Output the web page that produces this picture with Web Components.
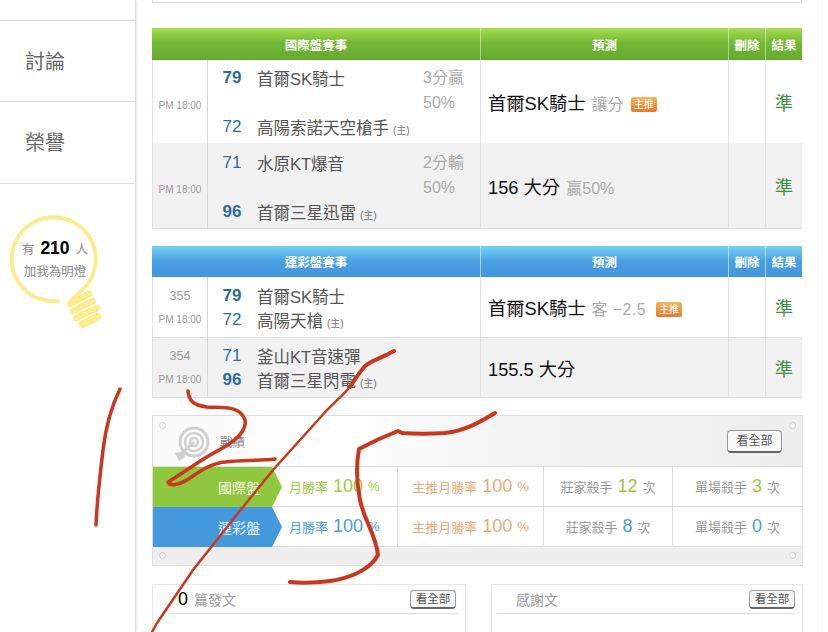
<!doctype html>
<html lang="zh-Hant">
<head>
<meta charset="utf-8">
<title>戰績</title>
<style>
  html, body { margin: 0; height: 632px; overflow: hidden; background: #fff; }
  body { font-family: "Liberation Sans", "Noto Sans CJK TC", sans-serif; }
</style>
</head>
<body>
<app-shell>
  <side-nav slot="side">
    <nav-item>討論</nav-item>
    <nav-item>榮譽</nav-item>
    <bulb-badge count="210"></bulb-badge>
  </side-nav>

  <score-table title="國際盤賽事" theme="green">
    <score-row height="83" pad="6" gap="25">
      <span slot="time">PM 18:00</span>
      <team-line score="79" win name="首爾SK騎士"></team-line>
      <team-line score="72" name="高陽索諾天空槍手" home></team-line>
      <span slot="line">3分贏<br>50%</span>
      <span slot="pick">首爾SK騎士 <small>讓分</small> <pick-badge></pick-badge></span>
      <span slot="result">準</span>
    </score-row>
    <score-row height="85" alt pad="8" gap="25">
      <span slot="time">PM 18:00</span>
      <team-line score="71" name="水原KT爆音"></team-line>
      <team-line score="96" win name="首爾三星迅雷" home></team-line>
      <span slot="line">2分輸<br>50%</span>
      <span slot="pick">156 大分 <small>贏50%</small></span>
      <span slot="result">準</span>
    </score-row>
  </score-table>

  <score-table title="運彩盤賽事" theme="blue" style="margin-top:17px">
    <score-row height="61" pad="7" gap="0" divided>
      <span slot="time"><b>355</b>PM 18:00</span>
      <team-line score="79" win name="首爾SK騎士"></team-line>
      <team-line score="72" name="高陽天槍" home></team-line>
      <span slot="pick">首爾SK騎士 <small style="letter-spacing:.4px">客 −2.5</small> <pick-badge style="margin-left:5px"></pick-badge></span>
      <span slot="result">準</span>
    </score-row>
    <score-row height="59" alt pad="6" gap="0">
      <span slot="time"><b>354</b>PM 18:00</span>
      <team-line score="71" name="釜山KT音速彈"></team-line>
      <team-line score="96" win name="首爾三星閃電" home></team-line>
      <span slot="pick">155.5 大分</span>
      <span slot="result">準</span>
    </score-row>
  </score-table>

  <record-panel>
    <record-row label="國際盤" theme="green">
      <record-cell lead>月勝率 <big-num>100</big-num> %</record-cell>
      <record-cell tone="orange">主推月勝率 <big-num>100</big-num> %</record-cell>
      <record-cell>莊家殺手 <big-num>12</big-num> 次</record-cell>
      <record-cell>單場殺手 <big-num>3</big-num> 次</record-cell>
    </record-row>
    <record-row label="運彩盤" theme="blue">
      <record-cell lead>月勝率 <big-num>100</big-num> %</record-cell>
      <record-cell tone="orange">主推月勝率 <big-num>100</big-num> %</record-cell>
      <record-cell>莊家殺手 <big-num>8</big-num> 次</record-cell>
      <record-cell>單場殺手 <big-num>0</big-num> 次</record-cell>
    </record-row>
  </record-panel>

  <panel-pair>
    <small-panel style="width:314px;--ml:15px;--mr:7px;--pad:10px;--pr:2px"><span style="color:#000;font-size:18px;margin-right:2px">0</span> 篇發文</small-panel>
    <small-panel style="width:312px;--ml:5px;--mr:7px;--pad:19px;--pr:0px">感謝文</small-panel>
  </panel-pair>

  <ink-marks slot="ink"></ink-marks>
</app-shell>

<script>
  function def(name, html, init) {
    const template = document.createElement('template');
    template.innerHTML = html;
    customElements.define(name, class extends HTMLElement {
      constructor() {
        super();
        this.attachShadow({ mode: 'open' }).appendChild(template.content.cloneNode(true));
      }
      connectedCallback() { if (init) init(this, this.shadowRoot); }
    });
  }

  def('app-shell', `
    <style>
      :host { display: grid; grid-template-columns: 136px 681px 1fr; position: relative; height: 632px; overflow: hidden; color: #333; }
      main { padding-left: 16px; min-width: 0; }
      .above { box-sizing: border-box; width: 650px; height: 3px; border: 1px solid #ddd; border-top: 0; margin-bottom: 25px; }
      .edge { border-left: 1px solid #f8f8f8; }
    </style>
    <slot name="side"></slot>
    <main><div class="above"></div><slot></slot></main>
    <div class="edge"></div>
    <slot name="ink"></slot>`);

  def('side-nav', `
    <style>
      :host { display: block; padding-top: 20px; border-right: 1px solid #ddd; box-shadow: 1px 0 3px #e8e8e8; height: 612px; }
    </style>
    <slot></slot>`);

  def('nav-item', `
    <style>
      :host { display: flex; align-items: center; box-sizing: border-box; height: 81px; padding: 0 0 1px 25px; border-top: 1px solid #ddd; font-size: 20px; color: #666; }
      :host(:nth-of-type(2)) { height: 83px; border-bottom: 1px solid #ddd; padding-bottom: 3px; }
    </style>
    <slot></slot>`);

  def('bulb-badge', `
    <style>
      :host { display: block; position: relative; height: 150px; }
      svg { position: absolute; left: 0; top: 0; }
      .txt { position: absolute; left: 11px; width: 88px; top: 53px; text-align: center; color: #888; font-size: 12.5px; line-height: 22px; }
      b { color: #000; font-size: 17.5px; margin: 0 6px; }
    </style>
    <svg width="120" height="150" viewBox="0 183 120 150" fill="none" stroke="#f9ed90" stroke-linecap="round">
      <path d="M58 300 A42 42 0 1 1 86 285 L71 300" stroke-width="4"/>
      <g stroke-width="6.5">
        <path d="M70 303 L89 293"/>
        <path d="M73 310 L93 300"/>
        <path d="M76 317 L97 307"/>
        <path d="M83 323 L97 316" stroke-width="8"/>
      </g>
    </svg>
    <div class="txt">有<b></b>人<br>加我為明燈</div>`,
    (el, root) => { root.querySelector('b').textContent = el.getAttribute('count'); });

  def('score-table', `
    <style>
      :host { display: block; width: 650px; border-bottom: 1px solid #ddd; }
      .head { display: grid; grid-template-columns: 328px 248px 37px 37px; height: 32px; color: #fff; font-size: 12.5px; font-weight: bold; }
      .head div { display: flex; align-items: center; justify-content: center; border-left: 1px solid rgba(255,255,255,.45); }
      .head div:first-child { border-left: 0; }
      :host([theme=green]) .head { background: linear-gradient(#a6dc50, #74b936 45%, #64ab2c); }
      :host([theme=blue]) .head { background: linear-gradient(#74d2f6, #4a9fe2 50%, #4496df); height: 31px; }
      :host([theme=blue]) .head div { border-left-color: rgba(255,255,255,.55); }
    </style>
    <div class="head"><div id="t"></div><div>預測</div><div>刪除</div><div>結果</div></div>
    <slot></slot>`,
    (el, root) => { root.getElementById('t').textContent = el.getAttribute('title'); });

  def('score-row', `
    <style>
      :host { display: grid; grid-template-columns: 55px 273px 248px 37px 37px; box-sizing: border-box; background: #fff; }
      :host([alt]) { background: #f1f1f1; }
      :host([divided]) { border-bottom: 1px solid #ddd; }
      .c { border-left: 1px solid #e4e4e4; display: flex; align-items: center; min-width: 0; box-sizing: border-box; }
      .time { justify-content: center; align-items: center; padding-top: 8px; font-size: 10px; line-height: 24px; color: #999; text-align: center; }
      .teams { display: grid; grid-template-columns: 1fr 57px; align-items: start; border-left-color: #d8d8d8; }
      .names { display: flex; flex-direction: column; }
      .line { font-size: 16px; line-height: 24.5px; color: #aaa; }
      .pick { padding-left: 7px; font-size: 18.3px; color: #111; white-space: nowrap; }
      .result { justify-content: center; font-size: 18px; color: #3f8f45; }
      ::slotted([slot=time]) { display: block; }
      ::slotted([slot=pick]) { display: block; }
    </style>
    <div class="c time"><slot name="time"></slot></div>
    <div class="c teams"><div class="names"><slot></slot></div><div class="line"><slot name="line"></slot></div></div>
    <div class="c pick"><slot name="pick"></slot></div>
    <div class="c"></div>
    <div class="c result"><slot name="result"></slot></div>`,
    (el, root) => {
      const pad = el.getAttribute('pad') + 'px';
      el.style.height = el.getAttribute('height') + 'px';
      const names = root.querySelector('.names');
      names.style.paddingTop = pad;
      names.style.gap = el.getAttribute('gap') + 'px';
      root.querySelector('.line').style.paddingTop = pad;
      const no = el.querySelector('[slot=time] b');
      if (no) {
        const tc = root.querySelector('.time');
        tc.style.alignItems = 'flex-start';
        tc.style.paddingTop = pad;
        no.style.cssText = 'display:block;font-weight:normal;font-size:12.5px;color:#999';
      }
      el.querySelectorAll('small').forEach(s => { s.style.fontSize = '16px'; s.style.color = '#aaa'; s.style.marginLeft = '1px'; });
    });

  def('team-line', `
    <style>
      :host { display: grid; grid-template-columns: 48px 1fr; height: 24px; align-items: center; white-space: nowrap; }
      .s { text-align: center; font-size: 17px; color: #2f6c9c; }
      :host([win]) .s { font-weight: bold; }
      .n { padding-left: 1px; font-size: 16.5px; color: #555; }
      .h { font-size: 10px; color: #777; margin-left: 4px; }
    </style>
    <span class="s"></span><span class="n"><span class="t"></span><span class="h" hidden>(主)</span></span>`,
    (el, root) => {
      root.querySelector('.s').textContent = el.getAttribute('score');
      root.querySelector('.t').textContent = el.getAttribute('name');
      root.querySelector('.h').hidden = !el.hasAttribute('home');
    });

  def('pick-badge', `
    <style>
      :host { display: inline-block; vertical-align: 2px; margin-left: 2px; width: 26px; height: 15px; line-height: 15px; text-align: center; font-size: 10px; color: #fff; border-radius: 2px; background: linear-gradient(#f6b65a, #e57a2c); }
    </style>主推`);

  def('record-panel', `
    <style>
      :host { display: block; position: relative; width: 651px; box-sizing: border-box; margin-top: 17px; border: 1px solid #ddd; border-right-color: #e4e4e4; background: #eee; }
      .top { display: flex; align-items: center; justify-content: space-between; height: 51px; padding: 0 20px 0 21px; box-sizing: border-box; background: linear-gradient(90deg, #fafafa, #fff 30%, #f3f3f3 55%, #eee); border-bottom: 1px solid #ddd; }
      .title { display: flex; align-items: center; gap: 10px; font-size: 12.5px; color: #888; }
      .title svg { margin-top: 6px; }
      .foot { height: 18px; }
      i { position: absolute; width: 5px; height: 5px; border: 1px solid #ccc; border-radius: 50%; background: #fff; }
    </style>
    <i style="left:6px;top:6px"></i><i style="right:6px;top:6px"></i><i style="left:6px;bottom:6px"></i><i style="right:6px;bottom:6px"></i>
    <div class="top">
      <div class="title">
        <svg width="36" height="36" viewBox="0 0 36 36" fill="none" stroke="#cfcfcf">
          <circle cx="20" cy="16" r="14" stroke-width="3"/>
          <circle cx="20" cy="16" r="9" stroke-width="2.5"/>
          <circle cx="20" cy="16" r="4" stroke-width="2.5"/>
          <path d="M20 16 L7 28" stroke-width="3"/>
          <path d="M1 27 L10 25 L11 31 L5 35 Z" fill="#cfcfcf" stroke="none"/>
        </svg>
        <span>戰績</span>
      </div>
      <see-all big></see-all>
    </div>
    <slot></slot>
    <div class="foot"></div>`);

  def('see-all', `
    <style>
      :host { display: inline-block; box-sizing: border-box; width: 46px; height: 19px; line-height: 16px; text-align: center; font-size: 11.5px; color: #555; background: #f8f8f8; border: 1px solid #999; border-bottom: 2px solid #666; border-radius: 4px; white-space: nowrap; }
      :host([big]) { width: 55px; height: 23px; line-height: 20px; font-size: 12px; }
    </style>看全部`);

  def('record-row', `
    <style>
      :host { display: grid; grid-template-columns: 129px 115px 146px 129px 130px; height: 40px; background: #fff; box-shadow: inset 0 -1px #ddd; }
      :host([theme=green]) { --accent: #9ac93c; --lead: #9ac93c; }
      :host([theme=blue]) { --accent: #4a9edd; --lead: #4a9edd; }
      .label { display: flex; align-items: center; justify-content: flex-end; padding-right: 22px; font-size: 14px; clip-path: polygon(0 0, 119px 0, 129px 50%, 119px 100%, 0 100%); }
      :host([theme=green]) .label { background: #8fc73e; color: #f1f8e0; }
      :host([theme=blue]) .label { background: #4499dd; color: #eaf4fc; }
    </style>
    <div class="label"></div><slot></slot>`,
    (el, root) => { root.querySelector('.label').textContent = el.getAttribute('label'); });

  def('record-cell', `
    <style>
      :host { display: flex; align-items: center; justify-content: center; gap: 5px; font-size: 13px; color: #999; white-space: nowrap; border-left: 1px solid #ddd; border-bottom: 1px solid #ddd; }
      :host([lead]) { color: var(--lead); justify-content: flex-start; padding-left: 7px; border-left: 0; }
      :host([tone=orange]) { color: #e9ab74; --accent: #e9ab74; }
    </style>
    <slot></slot>`);

  def('big-num', `
    <style>
      :host { font-size: 18px; color: var(--accent); }
    </style>
    <slot></slot>`);

  def('panel-pair', `
    <style>
      :host { display: flex; justify-content: space-between; width: 651px; margin-top: 18px; }
    </style>
    <slot></slot>`);

  def('small-panel', `
    <style>
      :host { display: block; box-sizing: border-box; height: 70px; border: 1px solid #e8e8e8; border-bottom: 0; }
      .head { display: flex; align-items: center; justify-content: space-between; box-sizing: border-box; height: 29px; margin: 0 var(--mr) 0 var(--ml); padding: 0 var(--pr) 0 var(--pad); border-bottom: 1px solid #ddd; font-size: 14px; color: #999; }
    </style>
    <div class="head"><span><slot></slot></span><see-all></see-all></div>`);

  def('ink-marks', `
    <style>
      :host { position: absolute; left: 0; top: 0; width: 828px; height: 632px; pointer-events: none; }
      svg { display: block; }
    </style>
    <svg width="828" height="632" viewBox="0 0 828 632" fill="none" stroke="#c9371f" stroke-linecap="round" stroke-linejoin="round">
      <path d="M120 389 C112 405 106 425 103 450 C100 475 97 500 96 525" stroke-width="3.5"/>
      <path d="M188 391 C189 400 192 405 207 407 C222 408 240 405 245 420 C248 435 225 447 210 455 C195 464 180 475 168 482 C170 486 178 486 190 478 C202 470 212 463 225 462 C240 460 258 461 275 459" stroke-width="3.5"/>
      <path d="M394 351 C382 358 372 360 365 366 C358 374 354 381 350 387" stroke-width="4"/>
      <path d="M350 387 C342 396 335 402 327 410 L273 470 L243 507 L193 570 L157 623 L152 632" stroke-width="2.5"/>
      <path d="M495 413 C480 422 465 431 445 433 C430 434 415 434 402 433 L398 431 C385 436 372 442 359 449 C356 465 357 485 360 500 C364 520 376 535 378 555 C370 570 350 578 330 581 C315 583 300 583 290 582" stroke-width="4"/>
    </svg>`);
</script>
</body>
</html>
